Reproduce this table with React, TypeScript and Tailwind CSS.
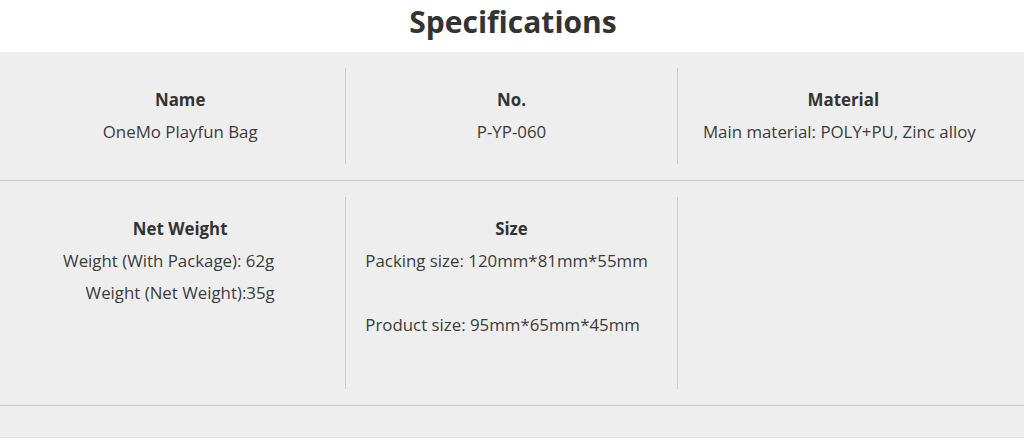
import React from "react";

export default function App() {
  return (
    <div className="w-[1026px] h-[440px] bg-white font-['Open_Sans',sans-serif] text-[#333333]">
      <h2 className="h-[52px] text-center text-[30px] font-bold leading-[44px] text-[#333333]">
        Specifications
      </h2>
      <div className="w-[1024px] bg-[#eeeeee]">
        <div className="grid grid-cols-3 border-b border-[#c8c8c8] px-[15px] py-4">
          <div className="border-r border-[#cccccc] py-4 text-center text-[16.85px] leading-8">
            <div className="font-bold text-[#333333]">Name</div>
            <div className="text-[#3c3c3c]">OneMo Playfun Bag</div>
          </div>
          <div className="border-r border-[#cccccc] py-4 text-center text-[16.85px] leading-8">
            <div className="font-bold text-[#333333]">No.</div>
            <div className="text-[#3c3c3c]">P-YP-060</div>
          </div>
          <div className="py-4 text-center text-[16.85px] leading-8">
            <div className="font-bold text-[#333333]">Material</div>
            <div className="pr-[8px] text-[#3c3c3c]">Main material: POLY+PU, Zinc alloy</div>
          </div>
        </div>
        <div className="grid grid-cols-3 border-b border-[#c8c8c8] px-[15px] py-4">
          <div className="border-r border-[#cccccc] py-4 text-center text-[16.85px] leading-8">
            <div className="font-bold text-[#333333]">Net Weight</div>
            <div className="pr-[23px] text-[#3c3c3c]">Weight (With Package): 62g</div>
            <div className="text-[#3c3c3c]">Weight (Net Weight):35g</div>
          </div>
          <div className="border-r border-[#cccccc] py-4 text-[16.85px] leading-8">
            <div className="text-center font-bold text-[#333333]">Size</div>
            <div className="pl-[19px] text-[#3c3c3c]">Packing size: 120mm*81mm*55mm</div>
            <div className="h-8" />
            <div className="pl-[19px] text-[#3c3c3c]">Product size: 95mm*65mm*45mm</div>
            <div className="h-8" />
          </div>
          <div className="py-4" />
        </div>
        <div className="h-[32px] border-b border-[#e2e2e2]" />
      </div>
    </div>
  );
}
